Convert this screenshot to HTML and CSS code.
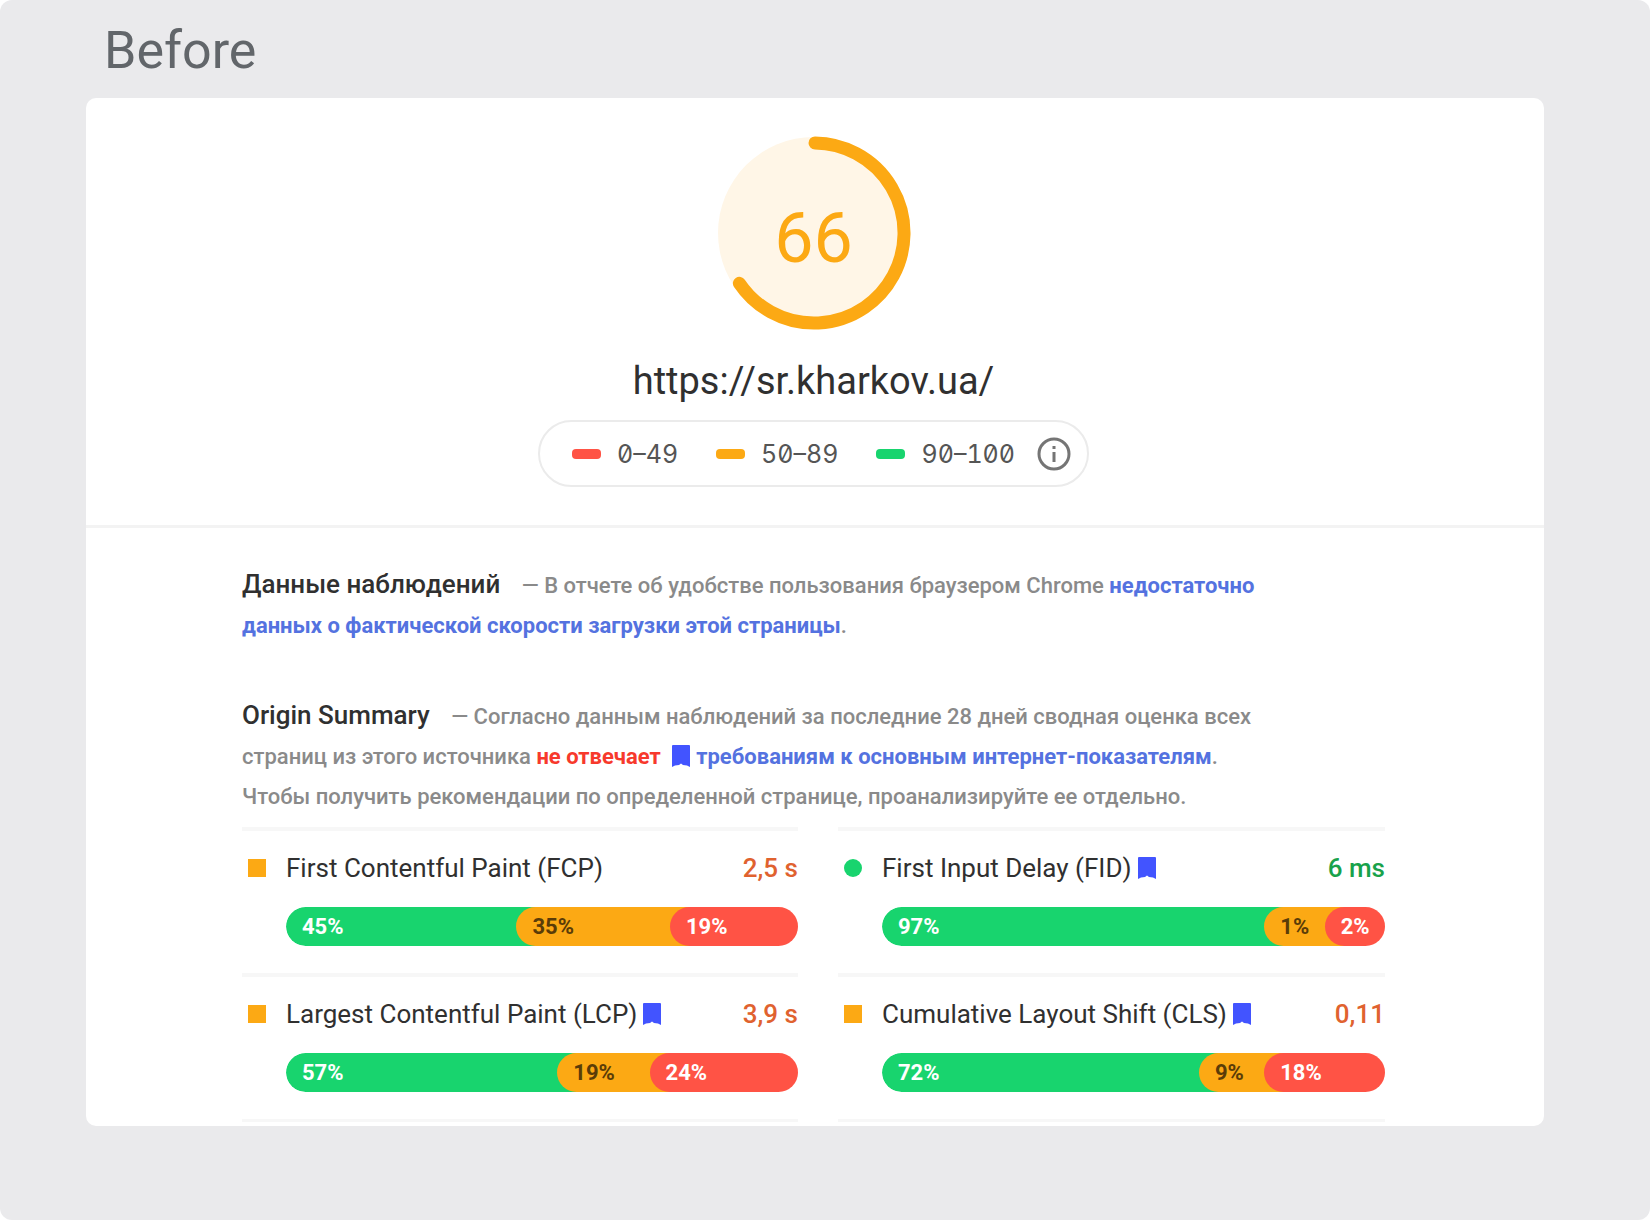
FILE: index.html
```html
<!DOCTYPE html>
<html lang="ru">
<head>
<meta charset="utf-8">
<meta name="viewport" content="width=device-width, initial-scale=1">
<title>Before</title>
<link rel="stylesheet" href="styles.css">
</head>
<body>
<svg class="defs" aria-hidden="true">
  <symbol id="bookmark" viewBox="0 0 18 22"><path d="M1 0h16q1 0 1 1v21l-3-1.500q-2-.5-4-.5l-2-1.500-2 1.500q-2 0-4 .5L0 22V1q0-1 1-1z"/></symbol>
</svg>
<main class="stage">
  <h1 class="stage-title">Before</h1>
  <section class="report">
    <header class="summary">
      <div class="gauge">
        <svg class="gauge-ring" viewBox="0 0 194 194" aria-hidden="true">
          <circle cx="97" cy="97" r="96" fill="#fff6e7"/>
          <path d="M98 7A90 90 0 1 1 22.400 147.300" fill="none" stroke="#fca914" stroke-width="13" stroke-linecap="round"/>
        </svg>
        <span class="gauge-score">66</span>
      </div>
      <p class="url">https://sr.kharkov.ua/</p>
      <div class="legend">
        <ul class="scale">
          <li class="range range-poor">0–49</li>
          <li class="range range-average">50–89</li>
          <li class="range range-good">90–100</li>
        </ul>
        <button class="info" type="button" aria-label="Info">
          <svg viewBox="0 0 34 34" aria-hidden="true"><circle cx="17" cy="17" r="15" fill="none" stroke="currentColor" stroke-width="3"/><path d="M17 15v10M17 9v3" stroke="currentColor" stroke-width="3"/></svg>
        </button>
      </div>
    </header>
    <div class="details">
      <div class="note">
        <h2 class="note-title">Данные наблюдений</h2>
        <p class="note-text">— В отчете об удобстве пользования браузером Chrome <a href="#">недостаточно<br>данных о фактической скорости загрузки этой страницы</a>.</p>
      </div>
      <div class="note">
        <h2 class="note-title">Origin Summary</h2>
        <p class="note-text">— Согласно данным наблюдений за последние 28 дней сводная оценка всех<br>страниц из этого источника <strong class="fail">не отвечает</strong> <svg class="bookmark bookmark-text" aria-hidden="true"><use href="#bookmark"/></svg><a href="#">требованиям к основным интернет-показателям</a>.<br>Чтобы получить рекомендации по определенной странице, проанализируйте ее отдельно.</p>
      </div>
      <div class="metrics">
        <article class="metric">
          <span class="mark mark-average"></span>
          <h3 class="metric-name">First Contentful Paint (FCP)</h3>
          <span class="value value-average">2,5 s</span>
          <div class="bar">
            <span class="part part-good" style="--share:45%">45%</span><span class="part part-average" style="--share:30%">35%</span><span class="part part-poor" style="--share:25%">19%</span>
          </div>
        </article>
        <article class="metric">
          <span class="mark mark-good"></span>
          <h3 class="metric-name">First Input Delay (FID)<svg class="bookmark" aria-hidden="true"><use href="#bookmark"/></svg></h3>
          <span class="value value-good">6 ms</span>
          <div class="bar">
            <span class="part part-good" style="--share:76%">97%</span><span class="part part-average" style="--share:12%">1%</span><span class="part part-poor" style="--share:12%">2%</span>
          </div>
        </article>
        <article class="metric">
          <span class="mark mark-average"></span>
          <h3 class="metric-name">Largest Contentful Paint (LCP)<svg class="bookmark" aria-hidden="true"><use href="#bookmark"/></svg></h3>
          <span class="value value-average">3,9 s</span>
          <div class="bar">
            <span class="part part-good" style="--share:53%">57%</span><span class="part part-average" style="--share:18%">19%</span><span class="part part-poor" style="--share:29%">24%</span>
          </div>
        </article>
        <article class="metric">
          <span class="mark mark-average"></span>
          <h3 class="metric-name">Cumulative Layout Shift (CLS)<svg class="bookmark" aria-hidden="true"><use href="#bookmark"/></svg></h3>
          <span class="value value-average">0,11</span>
          <div class="bar">
            <span class="part part-good" style="--share:63%">72%</span><span class="part part-average" style="--share:13%">9%</span><span class="part part-poor" style="--share:24%">18%</span>
          </div>
        </article>
        <div class="rule"></div>
        <div class="rule"></div>
      </div>
    </div>
  </section>
</main>
</body>
</html>
```
FILE: styles.css
```css
:root {
  --good: #18d46e;
  --average: #fca914;
  --poor: #ff5345;
  --link: #5472e0;
  --mark: #4254ff;
}

* { box-sizing: border-box; }

body {
  margin: 0;
  background: #fff;
  font-family: Roboto, "Noto Sans", sans-serif;
  color: #303030;
}

h1, h2, h3, p, ul { margin: 0; padding: 0; }

.defs { display: none; }

.stage {
  min-height: 100vh;
  padding: 21px 106px 90px 86px;
  background: #eaeaec;
  border-radius: 12px;
}

.stage-title {
  padding: 0 18px 17px;
  font-size: 52px;
  line-height: 60px;
  font-weight: 400;
  color: #62666a;
}

.report {
  background: #fff;
  border-radius: 10px;
  overflow: hidden;
}

.summary {
  display: flex;
  flex-direction: column;
  align-items: center;
  padding: 38px 3px 38px 0;
  border-bottom: 3px solid #f3f3f3;
}

.gauge {
  display: grid;
  place-items: center;
  width: 194px;
  height: 194px;
}

.gauge > * { grid-area: 1 / 1; }

.gauge-ring { width: 100%; height: 100%; }

.gauge-score {
  padding-top: 9px;
  font-size: 70px;
  line-height: 80px;
  color: var(--average);
}

.url {
  padding: 29px 0 17px;
  font-size: 38px;
  line-height: 44px;
}

.legend {
  display: flex;
  align-items: center;
  gap: 22px;
  height: 67px;
  padding: 0 16px 0 32px;
  border: 2px solid #ebebeb;
  border-radius: 34px;
}

.scale {
  display: flex;
  gap: 38px;
  list-style: none;
  font-family: Inter, sans-serif;
  font-size: 25px;
  line-height: 32px;
  font-variant-numeric: tabular-nums slashed-zero;
  color: #555;
}

.range { display: flex; align-items: center; gap: 16px; }

.range::before {
  content: "";
  width: 29px;
  height: 10px;
  border-radius: 4px;
}

.range-poor::before { background: var(--poor); }
.range-average::before { background: var(--average); }
.range-good::before { background: var(--good); }

.info {
  width: 34px;
  height: 34px;
  padding: 0;
  border: 0;
  background: none;
  color: #757575;
}

.info svg { display: block; }

.details { padding: 36px 159px 4px 156px; }

.note {
  margin-bottom: 49px;
  font-size: 22px;
  line-height: 40px;
}

.note + .note { margin-bottom: 10px; }

.note-title {
  display: inline;
  padding-right: 16px;
  font-size: 26px;
  font-weight: 500;
}

.note-text {
  display: inline;
  font-weight: 500;
  color: #8a8a8a;
}

.note-text a {
  color: var(--link);
  font-weight: 700;
  text-decoration: none;
}

.fail { color: #f7392c; font-weight: 700; }

.bookmark {
  width: 18px;
  height: 22px;
  fill: var(--mark);
}

.bookmark-text { margin: 0 6px; vertical-align: -3px; }

.metrics {
  display: grid;
  grid-template-columns: 556fr 547fr;
  column-gap: 40px;
}

.metric {
  display: grid;
  grid-template-columns: 18px 1fr auto;
  align-items: center;
  column-gap: 20px;
  row-gap: 22px;
  padding: 20px 0 27px 6px;
  border-top: 4px solid #f7f7f7;
}

.mark { width: 18px; height: 18px; }
.mark-average { background: var(--average); }
.mark-good { background: var(--good); border-radius: 50%; }

.metric-name {
  display: flex;
  align-items: center;
  gap: 6px;
  font-size: 26px;
  line-height: 34px;
  font-weight: 400;
}

.value { font-size: 26px; line-height: 34px; font-weight: 500; }
.value-average { color: #e0622f; }
.value-good { color: #18a24b; }

.bar {
  grid-column: 2 / -1;
  display: flex;
  border-radius: 20px;
  overflow: hidden;
}

/* Each part runs on beneath the rounded start of the next one. */
.part {
  flex: none;
  width: calc(var(--share) + 20px);
  margin-right: -20px;
  padding-left: 16px;
  border-radius: 20px 0 0 20px;
  font-size: 22px;
  line-height: 39px;
  font-weight: 700;
  color: #fff;
}

.part-good { background: var(--good); }
.part-average { background: var(--average); color: #5a3c08; }
.part-poor { background: var(--poor); }

.rule { border-top: 3px solid #f7f7f7; }
```
